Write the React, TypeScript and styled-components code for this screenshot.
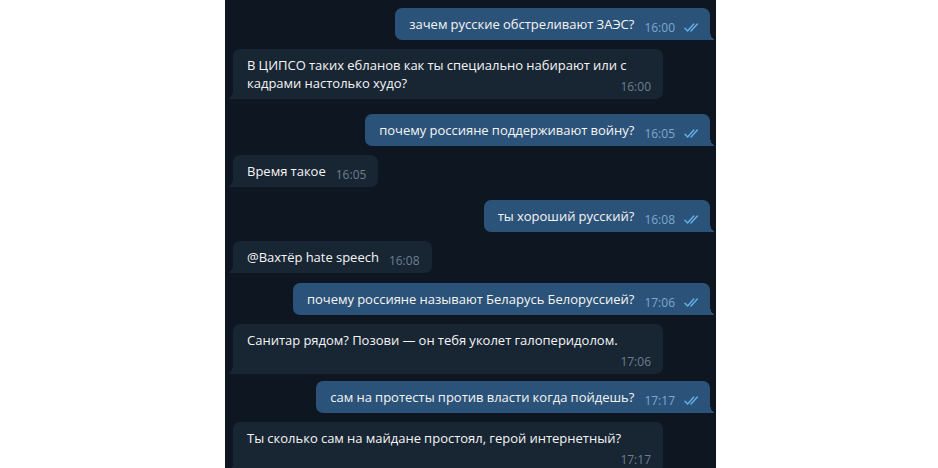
import React from 'react';
import styled, { createGlobalStyle, css } from 'styled-components';

type Side = 'in' | 'out';

interface Message {
    side: Side;
    text: string;
    time: string;
    space?: number;
}

const messages: Message[] = [
    { side: 'out', text: 'зачем русские обстреливают ЗАЭС?', time: '16:00', space: 0 },
    { side: 'in', text: 'В ЦИПСО таких ебланов как ты специально набирают или с кадрами настолько худо?', time: '16:00' },
    { side: 'out', text: 'почему россияне поддерживают войну?', time: '16:05', space: 15 },
    { side: 'in', text: 'Время такое', time: '16:05' },
    { side: 'out', text: 'ты хороший русский?', time: '16:08', space: 13 },
    { side: 'in', text: '@Вахтёр hate speech', time: '16:08' },
    { side: 'out', text: 'почему россияне называют Беларусь Белоруссией?', time: '17:06', space: 10 },
    { side: 'in', text: 'Санитар рядом? Позови — он тебя уколет галоперидолом.', time: '17:06' },
    { side: 'out', text: 'сам на протесты против власти когда пойдешь?', time: '17:17', space: 7 },
    { side: 'in', text: 'Ты сколько сам на майдане простоял, герой интернетный?', time: '17:17' }
];

const colors = {
    panel: '#0e1621',
    in: '#182533',
    out: '#2b5278',
    text: '#f5f5f5',
    timeIn: '#6d7f8f',
    timeOut: '#7da8d3',
    check: '#64b1ec'
};

function DoubleCheck() {
    return (
        <svg width="16" height="9" viewBox="0 0 16 9" fill="none">
            <path d="M1 5.3 L3.6 8 L9.8 1" stroke={colors.check} strokeWidth="1.4" strokeLinecap="round" strokeLinejoin="round" />
            <path d="M7 8 L13.4 1" stroke={colors.check} strokeWidth="1.4" strokeLinecap="round" />
        </svg>
    );
}

function App() {
    return (
        <>
            <GlobalStyle />
            <Page>
                <Chat>
                    {messages.map((m, i) => (
                        <Row key={i} $side={m.side} $space={m.space ?? 9}>
                            <Bubble $side={m.side}>
                                <Text>{m.text}</Text>
                                <Meta $side={m.side}>
                                    <span>{m.time}</span>
                                    {m.side === 'out' && <DoubleCheck />}
                                </Meta>
                            </Bubble>
                        </Row>
                    ))}
                </Chat>
            </Page>
        </>
    );
}

const GlobalStyle = createGlobalStyle`
    * {
        box-sizing: border-box;
    }

    body {
        margin: 0;
        background: #ffffff;
    }
`;

const Page = styled.div`
    display: flex;
    height: 468px;
    padding-left: 225px;
`;

const Chat = styled.main`
    display: flex;
    flex-direction: column;
    width: 491px;
    height: 468px;
    padding: 8px 6px 0 8px;
    overflow: hidden;
    background: ${colors.panel};
    font-family: 'Open Sans', 'Noto Sans', sans-serif;
`;

const Row = styled.div<{ $side: Side; $space: number }>`
    display: flex;
    flex-shrink: 0;
    justify-content: ${p => (p.$side === 'out' ? 'flex-end' : 'flex-start')};
    margin-top: ${p => p.$space}px;
`;

const Bubble = styled.div<{ $side: Side }>`
    position: relative;
    display: flow-root;
    max-width: 430px;
    padding: 7px 12px 5px 14px;
    border-radius: 7px;
    color: ${colors.text};
    font-size: 13px;
    line-height: 18px;
    background: ${p => (p.$side === 'out' ? colors.out : colors.in)};

    &::after {
        content: '';
        position: absolute;
        bottom: 0;
        width: 6px;
        height: 9px;
    }

    ${p =>
        p.$side === 'out'
            ? css`
                  border-bottom-right-radius: 0;
                  padding-right: 10px;

                  &::after {
                      right: -6px;
                      background: radial-gradient(ellipse 6px 9px at 100% 0, transparent 98%, ${colors.out} 100%);
                  }
              `
            : css`
                  border-bottom-left-radius: 0;

                  &::after {
                      left: -6px;
                      background: radial-gradient(ellipse 6px 9px at 0 0, transparent 98%, ${colors.in} 100%);
                  }
              `}
`;

const Text = styled.span`
    word-spacing: -0.2px;
`;

const Meta = styled.span<{ $side: Side }>`
    float: right;
    display: flex;
    align-items: flex-end;
    gap: 9px;
    height: 20px;
    margin-left: 10px;
    padding-bottom: 1px;
    font-size: 12px;
    line-height: 13px;
    color: ${p => (p.$side === 'out' ? colors.timeOut : colors.timeIn)};

    svg {
        margin-bottom: 2px;
    }
`;

export default App;
